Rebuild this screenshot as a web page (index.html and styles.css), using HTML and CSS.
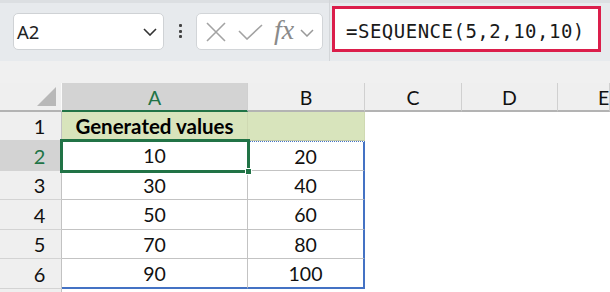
FILE: index.html
```html
<!DOCTYPE html>
<html>
<head>
<meta charset="utf-8">
<link rel="stylesheet" href="styles.css">
</head>
<body>
<div class="toolbar">
  <div class="namebox">
    <span class="name">A2</span>
    <svg class="chev" width="14" height="8" viewBox="0 0 14 8"><polyline points="1,1 7,7 13,1" fill="none" stroke="#333" stroke-width="1.6"/></svg>
  </div>
  <div class="dots"><i></i><i></i><i></i></div>
  <div class="fxbox">
    <svg class="ic-x" width="20" height="20" viewBox="0 0 20 20"><path d="M1 1 L19 19 M19 1 L1 19" stroke="#a3a3a3" stroke-width="1.6" fill="none"/></svg>
    <svg class="ic-check" width="25" height="16" viewBox="0 0 25 16"><polyline points="1,7 9,15 24,1" fill="none" stroke="#a3a3a3" stroke-width="1.6"/></svg>
    <span class="fx">fx</span>
    <svg class="chev2" width="14" height="8" viewBox="0 0 14 8"><polyline points="1,1 7,7 13,1" fill="none" stroke="#999" stroke-width="1.5"/></svg>
  </div>
  <div class="sep"></div>
  <div class="formula">=SEQUENCE(5,2,10,10)</div>
</div>
<div class="gap"></div>
<div class="sheet">
  <div class="corner"><span class="tri"></span></div>
  <div class="ch sel">A</div>
  <div class="ch">B</div>
  <div class="ch">C</div>
  <div class="ch">D</div>
  <div class="ch last">E</div>

  <div class="rh">1</div>
  <div class="c hd">Generated values</div>
  <div class="c hd">&nbsp;</div>
  <div class="e"></div><div class="e"></div><div class="e"></div>

  <div class="rh sel">2</div>
  <div class="c a active">10<span class="handle"></span></div>
  <div class="c b top">20</div>
  <div class="e"></div><div class="e"></div><div class="e"></div>

  <div class="rh">3</div>
  <div class="c a">30</div>
  <div class="c b">40</div>
  <div class="e"></div><div class="e"></div><div class="e"></div>

  <div class="rh">4</div>
  <div class="c a">50</div>
  <div class="c b">60</div>
  <div class="e"></div><div class="e"></div><div class="e"></div>

  <div class="rh">5</div>
  <div class="c a">70</div>
  <div class="c b">80</div>
  <div class="e"></div><div class="e"></div><div class="e"></div>

  <div class="rh">6</div>
  <div class="c a bot">90</div>
  <div class="c b bot">100</div>
  <div class="e"></div><div class="e"></div><div class="e"></div>

  <div class="rh tail"></div>
  <div class="e"></div><div class="e"></div><div class="e"></div><div class="e"></div><div class="e"></div>
</div>
</body>
</html>
```

FILE: styles.css
```css
* { box-sizing: border-box; }
html, body { margin: 0; padding: 0; }
body {
  width: 610px;
  height: 292px;
  overflow: hidden;
  background: #f0f0f0;
  font-family: Lato, "Noto Sans", sans-serif;
}
.toolbar {
  height: 61px;
  background: #e7eaed;
  border-top: 3px solid #dcdfe2;
  display: flex;
  align-items: flex-start;
}
.namebox {
  margin-left: 13px;
  margin-top: 10px;
  width: 151px;
  height: 37px;
  background: #fff;
  border: 1px solid #cfd2d5;
  border-radius: 5px;
  display: flex;
  align-items: center;
  justify-content: space-between;
  padding: 0 6px 0 3px;
}
.name {
  font-family: "Noto Sans", sans-serif;
  font-size: 18.5px;
  color: #222;
}
.chev { margin-top: 1px; }
.dots {
  margin-left: 15px;
  margin-top: 21px;
  display: flex;
  flex-direction: column;
  gap: 2.5px;
}
.dots i {
  display: block;
  width: 3px;
  height: 3px;
  background: #444;
  border-radius: 1px;
}
.fxbox {
  margin-left: 14px;
  margin-top: 10px;
  width: 127px;
  height: 37px;
  background: #fff;
  border: 1px solid #d2d5d8;
  border-radius: 5px;
  display: flex;
  align-items: center;
  padding-left: 9px;
}
.ic-x { margin-right: 12px; }
.ic-check { margin-right: 11px; }
.fx {
  font-family: "Liberation Serif", "DejaVu Serif", serif;
  font-style: italic;
  font-size: 28px;
  color: #8a8a8a;
  line-height: 1;
  margin-top: -3px;
}
.chev2 { margin-left: 6px; margin-top: 2px; }
.sep {
  align-self: stretch;
  width: 1px;
  margin-left: 6px;
  margin-top: -3px;
  background: #d3d6d9;
}
.formula {
  margin-left: 2px;
  margin-top: 3px;
  width: 269px;
  height: 46px;
  background: #fff;
  border: 3px solid #db1e4b;
  font-family: "DejaVu Sans Mono", "Liberation Mono", monospace;
  font-size: 19px;
  letter-spacing: 0.5px;
  color: #1a1a1a;
  padding: 10px 0 0 11px;
  line-height: 24px;
  white-space: nowrap;
}
.gap { height: 22px; }
.sheet {
  display: grid;
  grid-template-columns: 62px 186px 117px 97px 96px 52px;
  grid-template-rows: 29px 29px 30px 29px 30px 29px 30px 10px;
  font-size: 19.5px;
  color: #111;
}
.sheet > div {
  display: flex;
  align-items: center;
  justify-content: center;
}
.corner {
  background: #efefef;
  border-bottom: 2px solid #b3b3b3;
  border-right: 1px solid #fafafa;
  justify-content: flex-end !important;
  align-items: flex-end !important;
  padding: 0 5px 4px 0;
}
.tri {
  width: 0;
  height: 0;
  border-left: 19px solid transparent;
  border-bottom: 19px solid #b8b8b8;
}
.ch {
  background: #efefef;
  border-bottom: 2px solid #b3b3b3;
  border-right: 1px solid #d0d0d0;
  padding-top: 1px;
}
.ch.sel {
  background: #d3d3d3;
  color: #217346;
  border-bottom-color: #217346;
}
.ch.last { justify-content: flex-start !important; padding-left: 40px; }
.rh {
  background: #efefef;
  border-right: 1px solid #c2c2c2;
  border-bottom: 1px solid #d3d3d3;
  padding-left: 18px;
  font-size: 20px;
}
.rh.sel {
  background: #d3d3d3;
  color: #217346;
}
.rh.tail { border-bottom: none; }
.c {
  background: #fff;
  border-right: 1px solid #c3c3c3;
  border-bottom: 1px solid #c3c3c3;
}
.c.hd {
  background: #d8e4bc;
  font-weight: 700;
  font-size: 20.5px;
  color: #000;
  border-color: #d8e4bc #cfd9b2 #c0c8a8 #d8e4bc;
}
.c.b { border-right: 2px solid #4472c4; }
.c.top { border-top: 1px dotted #4472c4; }
.c.bot { border-bottom: 2px solid #4472c4; }
.e { background: #fff; }
.c.active {
  position: relative;
  outline: 3px solid #217346;
  outline-offset: -1px;
  z-index: 1;
}
.handle {
  position: absolute;
  right: -5px;
  bottom: -5px;
  width: 7px;
  height: 7px;
  background: #217346;
  border: 1px solid #fff;
}
```
